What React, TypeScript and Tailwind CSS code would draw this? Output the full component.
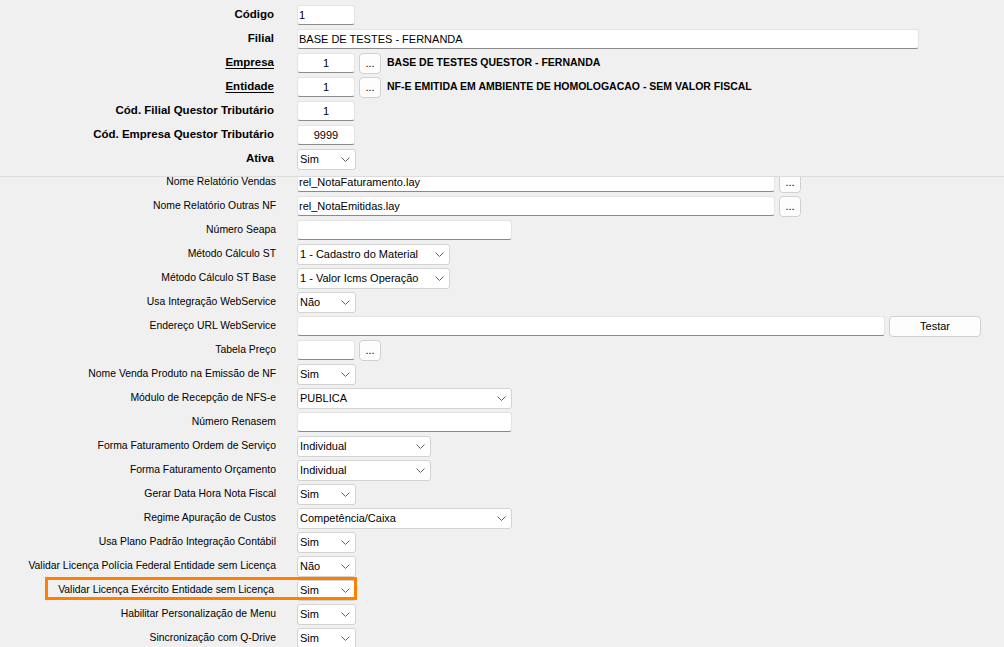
import React from 'react';

type FieldKind = 'text' | 'select' | 'lookup';

interface Field {
  label: string;
  kind: FieldKind;
  value?: string;
  width: string;
  center?: boolean;
  browse?: boolean;
  extra?: React.ReactNode;
  highlight?: boolean;
}

const Chevron = () => (
  <svg width="9" height="5" viewBox="0 0 9 5" className="shrink-0">
    <path d="M0.5 0.5 L4.5 4.5 L8.5 0.5" fill="none" stroke="#606060" strokeWidth="1" />
  </svg>
);

const TextBox = ({ value, width, center }: { value?: string; width: string; center?: boolean }) => (
  <div
    className={`h-[20px] ${width} bg-white rounded-[3px] border border-[#e4e4e4] border-b-[#8a8a8a] flex items-center px-[1px] text-[11px] text-black ${center ? 'justify-center' : ''}`}
  >
    {value}
  </div>
);

const SelectBox = ({ value, width }: { value?: string; width: string }) => (
  <div className={`h-[21px] ${width} bg-white rounded-[3px] border border-[#d3d3d3] flex items-center justify-between pl-[2px] pr-[5px] text-[11px] text-black`}>
    <span>{value}</span>
    <Chevron />
  </div>
);

const DotsButton = () => (
  <div className="h-[21px] w-[22px] rounded-[4px] border border-[#d0d0d0] bg-[#fdfdfd] flex items-end justify-center pb-[4px] text-[11px] leading-none text-black">
    ...
  </div>
);

const headerFields: Field[] = [
  { label: 'Código', kind: 'text', value: '1', width: 'w-[58px]' },
  { label: 'Filial', kind: 'text', value: 'BASE DE TESTES - FERNANDA', width: 'w-[622px]' },
  { label: 'Empresa', kind: 'lookup', value: '1', width: 'w-[58px]', center: true, extra: 'BASE DE TESTES QUESTOR - FERNANDA' },
  { label: 'Entidade', kind: 'lookup', value: '1', width: 'w-[58px]', center: true, extra: 'NF-E EMITIDA EM AMBIENTE DE HOMOLOGACAO - SEM VALOR FISCAL' },
  { label: 'Cód. Filial Questor Tributário', kind: 'text', value: '1', width: 'w-[58px]', center: true },
  { label: 'Cód. Empresa Questor Tributário', kind: 'text', value: '9999', width: 'w-[58px]', center: true },
  { label: 'Ativa', kind: 'select', value: 'Sim', width: 'w-[59px]' },
];

const configFields: Field[] = [
  { label: 'Nome Relatório Vendas', kind: 'text', value: 'rel_NotaFaturamento.lay', width: 'w-[478px]', browse: true },
  { label: 'Nome Relatório Outras NF', kind: 'text', value: 'rel_NotaEmitidas.lay', width: 'w-[478px]', browse: true },
  { label: 'Número Seapa', kind: 'text', width: 'w-[215px]' },
  { label: 'Método Cálculo ST', kind: 'select', value: '1 - Cadastro do Material', width: 'w-[153px]' },
  { label: 'Método Cálculo ST Base', kind: 'select', value: '1 - Valor Icms Operação', width: 'w-[153px]' },
  { label: 'Usa Integração WebService', kind: 'select', value: 'Não', width: 'w-[59px]' },
  { label: 'Endereço URL WebService', kind: 'text', width: 'w-[588px]' },
  { label: 'Tabela Preço', kind: 'text', width: 'w-[58px]', browse: true },
  { label: 'Nome Venda Produto na Emissão de NF', kind: 'select', value: 'Sim', width: 'w-[59px]' },
  { label: 'Módulo de Recepção de NFS-e', kind: 'select', value: 'PUBLICA', width: 'w-[215px]' },
  { label: 'Número Renasem', kind: 'text', width: 'w-[215px]' },
  { label: 'Forma Faturamento Ordem de Serviço', kind: 'select', value: 'Individual', width: 'w-[134px]' },
  { label: 'Forma Faturamento Orçamento', kind: 'select', value: 'Individual', width: 'w-[134px]' },
  { label: 'Gerar Data Hora Nota Fiscal', kind: 'select', value: 'Sim', width: 'w-[59px]' },
  { label: 'Regime Apuração de Custos', kind: 'select', value: 'Competência/Caixa', width: 'w-[215px]' },
  { label: 'Usa Plano Padrão Integração Contábil', kind: 'select', value: 'Sim', width: 'w-[59px]' },
  { label: 'Validar Licença Polícia Federal Entidade sem Licença', kind: 'select', value: 'Não', width: 'w-[59px]' },
  { label: 'Validar Licença Exército Entidade sem Licença', kind: 'select', value: 'Sim', width: 'w-[59px]', highlight: true },
  { label: 'Habilitar Personalização de Menu', kind: 'select', value: 'Sim', width: 'w-[59px]' },
  { label: 'Sincronização com Q-Drive', kind: 'select', value: 'Sim', width: 'w-[59px]' },
];

function FieldControl({ field }: { field: Field }) {
  if (field.kind === 'select') return <SelectBox value={field.value} width={field.width} />;
  return (
    <div className="flex items-center gap-[4px]">
      <TextBox value={field.value} width={field.width} center={field.center} />
      {(field.browse || field.kind === 'lookup') && <DotsButton />}
      {field.extra && (
        <span className="ml-[2px] font-bold text-[10.5px] text-black">{field.extra}</span>
      )}
    </div>
  );
}

export default function App() {
  return (
    <div className="w-[1004px] h-[647px] overflow-hidden bg-[#f0f0f0] font-['Liberation_Sans',Arial,sans-serif] select-none">
      {/* Header fields */}
      <div className="pt-[3px] h-[176px]">
        {headerFields.map(f => (
          <div key={f.label} className="h-[24px] flex items-center">
            <div className="w-[275px] pr-[1px] text-right text-[11.5px] font-bold text-black">
              <span className={f.kind === 'lookup' ? 'underline underline-offset-2' : ''}>{f.label}</span>
            </div>
            <div className="ml-[22px]">
              <FieldControl field={f} />
            </div>
          </div>
        ))}
      </div>

      {/* Scrollable configuration panel */}
      <div className="border-t border-[#dcdcdc] h-[471px] overflow-hidden">
        <div className="border-t border-[#fafafa] mt-[-8px]">
          {configFields.map(f => (
            <div key={f.label} className="relative h-[24px] flex items-center">
              <div className={`w-[276px] text-right text-[10.4px] text-black ${f.highlight ? 'pr-[2px]' : ''}`}>{f.label}</div>
              <div className="ml-[21px] flex items-center gap-[4px]">
                <FieldControl field={f} />
                {f.label === 'Endereço URL WebService' && (
                  <div className="h-[21px] w-[92px] rounded-[4px] border border-[#d0d0d0] bg-[#fdfdfd] flex items-center justify-center text-[11px] text-black">
                    Testar
                  </div>
                )}
              </div>
              {f.highlight && (
                <div className="absolute left-[45px] top-[-1px] w-[312px] h-[23px] border-[3px] border-[#ff8000] pointer-events-none" />
              )}
            </div>
          ))}
        </div>
      </div>
    </div>
  );
}
